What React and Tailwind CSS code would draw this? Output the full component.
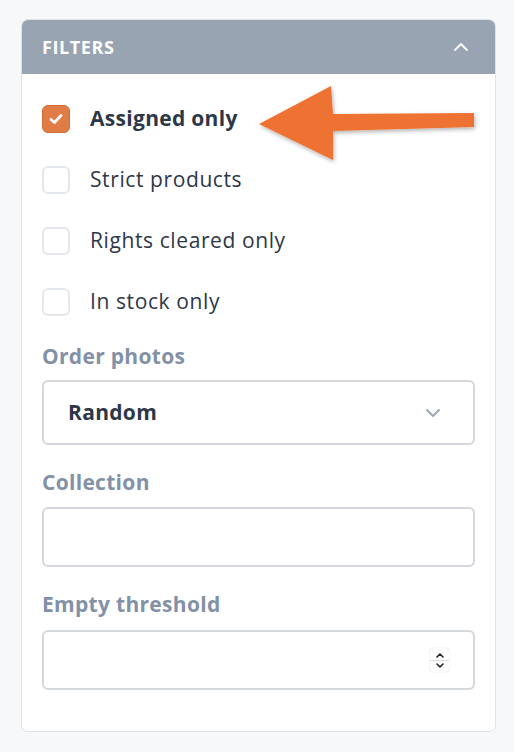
import React, { useState } from 'react';

const Checkbox = ({ checked, label, onToggle }) => (
    <label className="flex items-center h-[28px] cursor-pointer" onClick={onToggle}>
        {checked ? (
            <span className="w-[28px] h-[28px] shrink-0 rounded-[6px] bg-[#e07c45] border border-[#cf6c36] flex items-center justify-center">
                <svg width="14" height="12" viewBox="0 0 14 12" fill="none">
                    <path d="M2 6.5 L5.5 9.5 L12 2.5" stroke="white" strokeWidth="2.8" strokeLinecap="round" strokeLinejoin="round" />
                </svg>
            </span>
        ) : (
            <span className="w-[28px] h-[28px] shrink-0 rounded-[6px] bg-white border-2 border-[#e4e7eb]" />
        )}
        <span className={`ml-[20px] text-[21px] text-[#2d3748] ${checked ? 'font-bold tracking-[0.3px]' : 'font-normal tracking-[0.6px]'}`}>{label}</span>
    </label>
);

const App = () => {
    const [checks, setChecks] = useState([true, false, false, false]);
    const labels = ['Assigned only', 'Strict products', 'Rights cleared only', 'In stock only'];

    return (
        <div className="min-h-screen bg-[#f7f8fa] pt-[19px] px-[21px] pb-[20px]" style={{ fontFamily: '"Open Sans", Lato, sans-serif' }}>
            <div className="relative w-[475px] bg-white border border-[#dfe3e8] rounded-[7px] overflow-hidden">
                {/* header */}
                <div className="h-[54px] bg-[#98a4b1] flex items-center justify-between pl-[20px] pr-[26px]">
                    <span className="text-white font-bold text-[18px] tracking-[0.6px]">FILTERS</span>
                    <svg width="16" height="10" viewBox="0 0 16 10" fill="none">
                        <path d="M2 8 L8 2 L14 8" stroke="white" strokeWidth="1.8" strokeLinecap="round" strokeLinejoin="round" />
                    </svg>
                </div>

                <div className="px-[20px] pt-[31px] pb-[41px]">
                    <div className="flex flex-col gap-[33px]">
                        {labels.map((l, i) => (
                            <Checkbox
                                key={l}
                                label={l}
                                checked={checks[i]}
                                onToggle={() => setChecks(checks.map((c, j) => (j === i ? !c : c)))}
                            />
                        ))}
                    </div>

                    <div className="mt-[28px] text-[21px] leading-[24px] tracking-[0.3px] font-bold text-[#8391a7]">Order photos</div>
                    <div className="mt-[12px] h-[65px] border-2 border-[#d4d8dd] rounded-[6px] flex items-center justify-between pl-[24px] pr-[32px]">
                        <span className="text-[21px] tracking-[0.3px] font-bold text-[#2d3748]">Random</span>
                        <svg width="16" height="10" viewBox="0 0 16 10" fill="none">
                            <path d="M2 2 L8 8 L14 2" stroke="#a0a8b3" strokeWidth="2" strokeLinecap="round" strokeLinejoin="round" />
                        </svg>
                    </div>

                    <div className="mt-[25px] text-[21px] leading-[24px] tracking-[0.3px] font-bold text-[#8391a7]">Collection</div>
                    <div className="mt-[13px] h-[60px] border-2 border-[#d4d8dd] rounded-[6px]" />

                    <div className="mt-[25px] text-[21px] leading-[24px] tracking-[0.3px] font-bold text-[#8391a7]">Empty threshold</div>
                    <div className="mt-[14px] h-[60px] border-2 border-[#d4d8dd] rounded-[6px] flex items-center justify-end pr-[24px]">
                        <div className="w-[19px] h-[24px] rounded-[4px] bg-white shadow-[0_0_1px_rgba(0,0,0,0.3)] flex flex-col items-center justify-center">
                            <svg width="10" height="7" viewBox="0 0 10 7" fill="none">
                                <path d="M2 5 L5 2 L8 5" stroke="#222" strokeWidth="1.6" strokeLinecap="round" strokeLinejoin="round" />
                            </svg>
                            <div className="w-full h-px bg-[#ddd] my-[1px]" />
                            <svg width="10" height="7" viewBox="0 0 10 7" fill="none">
                                <path d="M2 2 L5 5 L8 2" stroke="#222" strokeWidth="1.6" strokeLinecap="round" strokeLinejoin="round" />
                            </svg>
                        </div>
                    </div>
                </div>

                {/* annotation arrow */}
                <svg className="absolute left-[-21px] top-[-19px] pointer-events-none" width="514" height="200" viewBox="0 0 514 200">
                    <defs>
                        <filter id="sh" x="-20%" y="-20%" width="140%" height="140%">
                            <feDropShadow dx="1" dy="2" stdDeviation="2" floodColor="#000" floodOpacity="0.3" />
                        </filter>
                    </defs>
                    <polygon
                        points="473,112 473,126 332,130 332,159 258,123 330,85 332,113"
                        fill="#ee7230"
                        filter="url(#sh)"
                    />
                </svg>
            </div>
        </div>
    );
};

export default App;
